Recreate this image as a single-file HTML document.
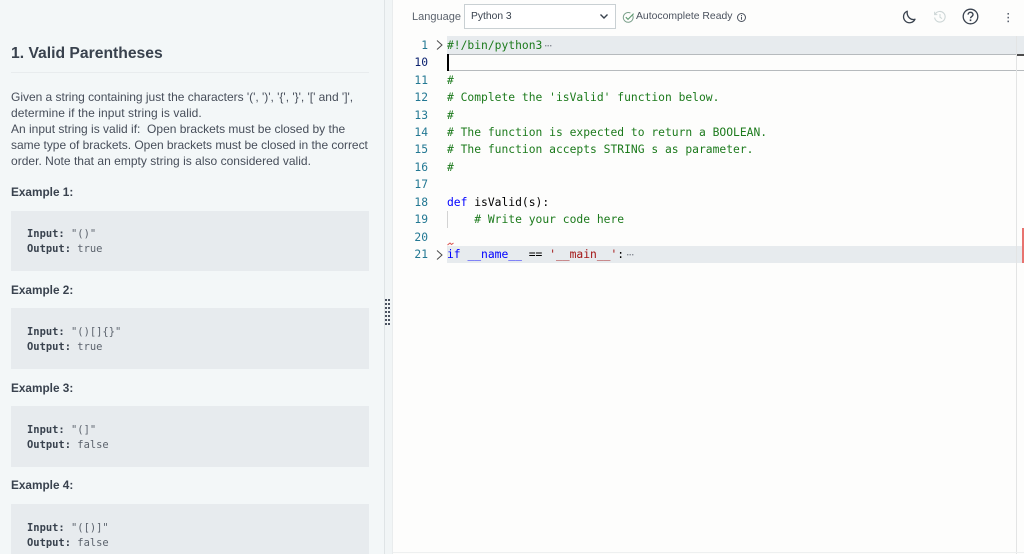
<!DOCTYPE html>
<html><head><meta charset="utf-8">
<style>
html,body{margin:0;padding:0;width:1024px;height:554px;overflow:hidden;background:#fdfdfc}
*{box-sizing:border-box}
.a{position:absolute;white-space:pre}
#left{position:absolute;left:0;top:0;width:385px;height:554px;background:#f3f7f8;border-right:1px solid #dfe4e6}
#split{position:absolute;left:385px;top:0;width:8px;height:554px;background:#f1f5f6;border-right:1px solid #e9eced}
.s{font-family:"Liberation Sans",sans-serif;color:#474e5a;font-size:12px;line-height:16px}
.b{font-family:"Liberation Sans",sans-serif;color:#39424e;font-size:11.8px;font-weight:bold;line-height:16px}
.box{position:absolute;left:11px;width:358px;background:#e7ebee}
.m{font-family:"DejaVu Sans Mono","Liberation Mono",monospace;font-size:10.45px;line-height:14px;color:#5c636d}
.m b{color:#39424e}
.c{font-family:"DejaVu Sans Mono","Liberation Mono",monospace;font-size:11.32px;line-height:17px;color:#000}
.n{position:absolute;left:405px;width:23px;text-align:right;font-family:"DejaVu Sans Mono",monospace;font-size:11.3px;line-height:17px;color:#237893}
.g{color:#1c7a1c}
.k{color:#0000ff}
.r{color:#a31515}
</style></head>
<body>
<div id="left"></div>
<div id="split"></div>

<div class="a" style="left:11px;top:44px;font:bold 15.7px/20px 'Liberation Sans',sans-serif;color:#39424e">1. Valid Parentheses</div>
<div class="a" style="left:11px;top:72px;width:358px;height:1px;background:#e8ecee"></div>

<div class="a s" style="left:11px;top:89px;letter-spacing:-.02px">Given a string containing just the characters '(', ')', '{', '}', '[' and ']',</div>
<div class="a s" style="left:11px;top:105px;letter-spacing:.07px">determine if the input string is valid.</div>
<div class="a s" style="left:11px;top:121px">An input string is valid if:  Open brackets must be closed by the</div>
<div class="a s" style="left:11px;top:137px;letter-spacing:-.03px">same type of brackets. Open brackets must be closed in the correct</div>
<div class="a s" style="left:11px;top:153px;letter-spacing:.02px">order. Note that an empty string is also considered valid.</div>

<div class="a b" style="left:11px;top:184px">Example 1:</div>
<div class="box" style="top:211px;height:60px"></div>
<div class="a m" style="left:27px;top:227px"><b>Input:</b> "()"</div>
<div class="a m" style="left:27px;top:242px"><b>Output:</b> true</div>

<div class="a b" style="left:11px;top:282px">Example 2:</div>
<div class="box" style="top:308px;height:61px"></div>
<div class="a m" style="left:27px;top:325px"><b>Input:</b> "()[]{}"</div>
<div class="a m" style="left:27px;top:340px"><b>Output:</b> true</div>

<div class="a b" style="left:11px;top:380px">Example 3:</div>
<div class="box" style="top:406px;height:61px"></div>
<div class="a m" style="left:27px;top:423px"><b>Input:</b> "(]"</div>
<div class="a m" style="left:27px;top:438px"><b>Output:</b> false</div>

<div class="a b" style="left:11px;top:477px">Example 4:</div>
<div class="box" style="top:504px;height:50px"></div>
<div class="a m" style="left:27px;top:521px"><b>Input:</b> "([)]"</div>
<div class="a m" style="left:27px;top:536px"><b>Output:</b> false</div>

<svg class="a" style="left:384px;top:298px" width="10" height="30"><g fill="#4a5260"><rect x="1" y="1" width="2" height="2"/><rect x="4" y="1" width="2" height="2"/><rect x="1" y="5" width="2" height="2"/><rect x="4" y="5" width="2" height="2"/><rect x="1" y="9" width="2" height="2"/><rect x="4" y="9" width="2" height="2"/><rect x="1" y="13" width="2" height="2"/><rect x="4" y="13" width="2" height="2"/><rect x="1" y="17" width="2" height="2"/><rect x="4" y="17" width="2" height="2"/><rect x="1" y="21" width="2" height="2"/><rect x="4" y="21" width="2" height="2"/><rect x="1" y="25" width="2" height="2"/><rect x="4" y="25" width="2" height="2"/></g></svg>

<!-- toolbar -->
<div class="a" style="left:412px;top:9px;font:11px/16px 'Liberation Sans',sans-serif;color:#5c636d">Language</div>
<div class="a" style="left:464px;top:4px;width:152px;height:25px;border:1px solid #c9d0d3;background:#fff"></div>
<div class="a" style="left:471px;top:9px;font:10.3px/15px 'Liberation Sans',sans-serif;color:#39424e">Python 3</div>
<svg class="a" style="left:599px;top:13px" width="10" height="8"><path d="M1.5 1.5L5 5l3.5-3.5" fill="none" stroke="#39424e" stroke-width="1.4"/></svg>
<svg class="a" style="left:622px;top:11px" width="13" height="13"><path d="M10.6 4.2A4.9 4.9 0 1 1 8.4 2" fill="none" stroke="#7a9f8a" stroke-width="1"/><path d="M3.8 6.2L6 8.4 11.6 2.6" fill="none" stroke="#5b9a6e" stroke-width="1.1"/></svg>
<div class="a" style="left:636px;top:9px;font:10.4px/15px 'Liberation Sans',sans-serif;color:#4b525e">Autocomplete Ready</div>
<svg class="a" style="left:736px;top:12px" width="11" height="11"><circle cx="5.5" cy="5.5" r="4" fill="none" stroke="#4b525e"/><path d="M5.5 4.8v3M5.5 3v1" stroke="#4b525e"/></svg>

<svg class="a" style="left:901px;top:9px" width="16" height="16"><path d="M6.2 2.2A6 6 0 1 0 14 10.2C10 11.5 5.5 8 6.2 2.2Z" fill="none" stroke="#39424e" stroke-width="1.3" stroke-linejoin="round"/></svg>
<svg class="a" style="left:933px;top:10px" width="14" height="14"><path d="M2.2 4.2A5.3 5.3 0 1 1 1.6 7.6" fill="none" stroke="#cdd6d6" stroke-width="1.1"/><path d="M1.6 1.8V4.6H4.3" fill="none" stroke="#cdd6d6"/><path d="M7 4V7.2L9 8.6" fill="none" stroke="#cdd6d6"/></svg>
<svg class="a" style="left:962px;top:8px" width="17" height="17"><circle cx="8.5" cy="8.5" r="7.3" fill="none" stroke="#39424e" stroke-width="1.3"/><path d="M6.1 6.6C6.1 3.6 11 3.6 11 6.6 11 8.4 8.5 8.4 8.5 10.3" fill="none" stroke="#39424e" stroke-width="1.4"/><rect x="7.7" y="11.4" width="1.6" height="1.7" fill="#39424e"/></svg>
<svg class="a" style="left:1007px;top:12px" width="4" height="11"><g fill="#4a5260"><rect x="0.5" y="1" width="1.4" height="1.6"/><rect x="0.5" y="4.8" width="1.4" height="1.6"/><rect x="0.5" y="8.6" width="1.4" height="1.6"/></g></svg>

<!-- editor -->
<div class="a" style="left:447px;top:36px;width:577px;height:18px;background:#e7ebee"></div>
<div class="a" style="left:447px;top:54px;width:569px;height:1px;background:#b6babd"></div>
<div class="a" style="left:447px;top:70px;width:577px;height:1px;background:#b6babd"></div>
<div class="a" style="left:1017px;top:54px;width:7px;height:2px;background:#4c4c4c"></div>
<div class="a" style="left:447px;top:54px;width:2px;height:17px;background:#000"></div>
<div class="a" style="left:447px;top:246px;width:577px;height:17px;background:#e7ebee"></div>
<div class="a" style="left:447px;top:211px;width:1px;height:17px;background:#d3d3d3"></div>
<div class="a" style="left:1016px;top:36px;width:1px;height:518px;background:#e3e4e4"></div>
<div class="a" style="left:1022px;top:228px;width:2px;height:35px;background:#e8736f"></div>
<div class="a" style="left:393px;top:552px;width:631px;height:1px;background:#eef0f0"></div>

<div class="n" style="top:37px">1</div>
<div class="n" style="top:54px;color:#0b216f">10</div>
<div class="n" style="top:72px">11</div>
<div class="n" style="top:89px">12</div>
<div class="n" style="top:107px">13</div>
<div class="n" style="top:124px">14</div>
<div class="n" style="top:141px">15</div>
<div class="n" style="top:159px">16</div>
<div class="n" style="top:176px">17</div>
<div class="n" style="top:194px">18</div>
<div class="n" style="top:211px">19</div>
<div class="n" style="top:229px">20</div>
<div class="n" style="top:246px">21</div>

<svg class="a" style="left:435px;top:39px" width="9" height="12"><path d="M2 1.5L7 6 2 10.5" fill="none" stroke="#4a4a4a" stroke-width="1"/></svg>
<svg class="a" style="left:435px;top:249px" width="9" height="12"><path d="M2 1.5L7 6 2 10.5" fill="none" stroke="#4a4a4a" stroke-width="1"/></svg>

<div class="a c g" style="left:447px;top:37px">#!/bin/python3</div>
<svg class="a" style="left:545px;top:44px" width="8" height="4"><g fill="#8a9098"><rect x="0" y="1" width="1.4" height="1.4"/><rect x="2.5" y="1" width="1.4" height="1.4"/><rect x="5" y="1" width="1.4" height="1.4"/></g></svg>
<div class="a c g" style="left:447px;top:72px">#</div>
<div class="a c g" style="left:447px;top:89px"># Complete the 'isValid' function below.</div>
<div class="a c g" style="left:447px;top:107px">#</div>
<div class="a c g" style="left:447px;top:124px"># The function is expected to return a BOOLEAN.</div>
<div class="a c g" style="left:447px;top:141px"># The function accepts STRING s as parameter.</div>
<div class="a c g" style="left:447px;top:159px">#</div>
<div class="a c" style="left:447px;top:194px"><span class="k">def</span> isValid(s):</div>
<div class="a c g" style="left:447px;top:211px">    # Write your code here</div>
<svg class="a" style="left:447px;top:242px" width="8" height="4"><path d="M0.5 3L3 1 4.5 2.5 6.5 1" fill="none" stroke="#d9534f" stroke-width="1"/></svg>
<div class="a c" style="left:447px;top:246px"><span class="k">if</span> <span class="k">__name__</span> == <span class="r">'__main__'</span>:</div>
<svg class="a" style="left:627px;top:253px" width="8" height="4"><g fill="#8a9098"><rect x="0" y="1" width="1.4" height="1.4"/><rect x="2.5" y="1" width="1.4" height="1.4"/><rect x="5" y="1" width="1.4" height="1.4"/></g></svg>
</body></html>
